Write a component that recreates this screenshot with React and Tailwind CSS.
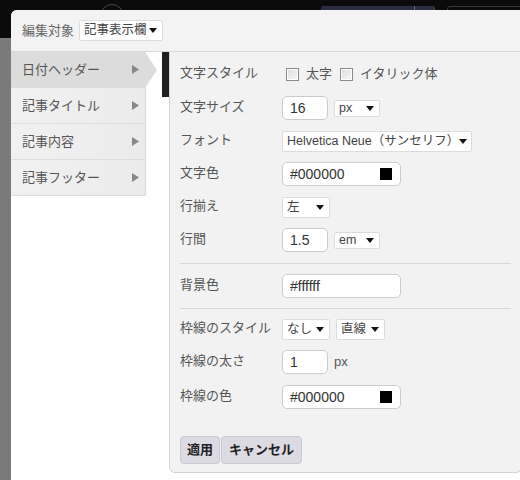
import React from 'react';

const font = "font-['Liberation_Sans','Noto_Sans_CJK_JP',sans-serif]";

const Caret = () => (
  <svg width="8" height="5" viewBox="0 0 8 5" className="shrink-0">
    <polygon points="0,0 8,0 4,5" fill="#111" />
  </svg>
);

const Select = ({ value, w, h = 'h-[20px]' }) => (
  <div className={`${w} ${h} flex items-center justify-between bg-white border border-[#dcdcdc] rounded-[2px] pl-[4px] pr-[5px] text-[12.5px] text-[#444] whitespace-nowrap overflow-hidden`}>
    <span className="leading-none">{value}</span>
    <Caret />
  </div>
);

const Input = ({ value, w, swatch }) => (
  <div className={`${w} h-[24px] flex items-center justify-between bg-white border border-[#cccccc] rounded-[5px] pl-[7px] pr-[8px] text-[14px] text-[#333] whitespace-nowrap`}>
    <span className="leading-none">{value}</span>
    {swatch && <span className="w-[12px] h-[12px] bg-black" />}
  </div>
);

const Check = () => (
  <span className="w-[13px] h-[13px] border border-[#8a8a8a] bg-gradient-to-br from-[#dcdcdc] to-[#f8f8f8] shadow-[inset_0_0_0_1px_#fff]" />
);

const Row = ({ label, h, mt, children }) => (
  <div className={`flex items-center ${h} ${mt}`}>
    <div className="w-[102px] text-[13px] text-[#555] -mt-[2px] whitespace-nowrap">{label}</div>
    <div className="flex items-center gap-[6px]">{children}</div>
  </div>
);

const tabs = ['日付ヘッダー', '記事タイトル', '記事内容', '記事フッター'];

export default function App() {
  return (
    <div className={`relative w-[520px] h-[480px] overflow-hidden bg-[#7a7a7a] ${font}`}>
      {/* page behind the dialog */}
      <div className="h-[38px] bg-[#0b0b0b]" />
      <div className="absolute left-[100px] top-[4px] w-[24px] h-[24px] rounded-full border border-[#4a4a4a]" />
      <div className="absolute left-[321px] top-[6px] w-[114px] h-[12px] rounded-[3px] bg-[#2a2b44] border-r border-[#555]" />
      <div className="absolute left-[414px] top-[6px] w-px h-[6px] bg-[#666]" />
      <div className="absolute left-[447px] top-[6px] w-[90px] h-[20px] rounded-[3px] border border-[#3a3a3a]" />

      {/* dialog */}
      <div className="absolute left-[11px] top-[10px] w-[511px] h-[472px] bg-white rounded-tl-[6px] flex flex-col">
        <div className="h-[42px] shrink-0 bg-[#f3f3f3] border-b border-[#d6d6d6] rounded-tl-[6px] flex items-center pl-[11px] gap-[5px]">
          <span className="text-[13px] text-[#666]">編集対象</span>
          <Select value="記事表示欄" w="w-[84px]" h="h-[21px]" />
        </div>

        <div className="flex flex-1">
          {/* tabs */}
          <div className="w-[135px] shrink-0 flex flex-col self-start">
            {tabs.map((t, i) => (
              <div
                key={t}
                className={`relative h-[36px] flex items-center justify-between pl-[11px] pr-[6px] text-[13px] text-[#555] border-b border-r border-[#dddddd] ${
                  i === 0 ? 'bg-[#dcdcdc] border-r-transparent' : 'bg-gradient-to-r from-[#f1f1f1] to-[#ebebeb]'
                }`}
              >
                <span>{t}</span>
                <svg width="7" height="9" viewBox="0 0 7 9">
                  <polygon points="0,0 7,4.5 0,9" fill="#888" />
                </svg>
                {i === 0 && (
                  <svg className="absolute right-[-12px] top-0" width="12" height="36" viewBox="0 0 12 36">
                    <polygon points="0,0 12,18 0,36" fill="#dcdcdc" />
                  </svg>
                )}
              </div>
            ))}
          </div>

          <div className="w-[16px] shrink-0" />
          <div className="w-[7px] h-[45px] shrink-0 bg-[#1f1f1f]" />

          {/* settings panel */}
          <div className="flex-1 h-[421px] bg-[#f2f2f2] border-l border-r border-b border-[#d4d4d4] rounded-bl-[6px] rounded-br-[6px] pl-[10px] pr-[10px] pt-[12px] flex flex-col">
            <Row label="文字スタイル" h="h-[20px]">
              <div className="flex items-center text-[13px] text-[#555] ml-[4px]">
                <Check />
                <span className="ml-[7px]">太字</span>
                <span className="ml-[8px] flex"><Check /></span>
                <span className="ml-[7px]">イタリック体</span>
              </div>
            </Row>
            <Row label="文字サイズ" h="h-[24px]" mt="mt-[12px]">
              <Input value="16" w="w-[46px]" />
              <Select value="px" w="w-[46px]" h="h-[17px]" />
            </Row>
            <Row label="フォント" h="h-[20px]" mt="mt-[11px]">
              <Select value="Helvetica Neue（サンセリフ）" w="w-[190px]" h="h-[21px]" />
            </Row>
            <Row label="文字色" h="h-[24px]" mt="mt-[11px]">
              <Input value="#000000" w="w-[119px]" swatch />
            </Row>
            <Row label="行揃え" h="h-[20px]" mt="mt-[11px]">
              <Select value="左" w="w-[48px]" h="h-[21px]" />
            </Row>
            <Row label="行間" h="h-[24px]" mt="mt-[11px]">
              <Input value="1.5" w="w-[46px]" />
              <Select value="em" w="w-[46px]" h="h-[17px]" />
            </Row>
            <div className="h-px bg-[#d8d8d8] mt-[11px]" />
            <Row label="背景色" h="h-[24px]" mt="mt-[10px]">
              <Input value="#ffffff" w="w-[119px]" />
            </Row>
            <div className="h-px bg-[#d8d8d8] mt-[10px]" />
            <Row label="枠線のスタイル" h="h-[20px]" mt="mt-[10px]">
              <Select value="なし" w="w-[48px]" h="h-[21px]" />
              <Select value="直線" w="w-[49px]" h="h-[21px]" />
            </Row>
            <Row label="枠線の太さ" h="h-[24px]" mt="mt-[11px]">
              <Input value="1" w="w-[46px]" />
              <span className="text-[13px] text-[#555]">px</span>
            </Row>
            <Row label="枠線の色" h="h-[24px]" mt="mt-[11px]">
              <Input value="#000000" w="w-[119px]" swatch />
            </Row>
            <div className="flex mt-[27px] gap-px">
              <button className="h-[28px] px-[6px] rounded-[4px] bg-[#dcdae2] border border-[#c9c7d0] text-[13px] font-bold text-[#222]">適用</button>
              <button className="h-[28px] px-[7px] rounded-[4px] bg-[#dcdae2] border border-[#c9c7d0] text-[13px] font-bold text-[#222]">キャンセル</button>
            </div>
          </div>
        </div>
      </div>
    </div>
  );
}
